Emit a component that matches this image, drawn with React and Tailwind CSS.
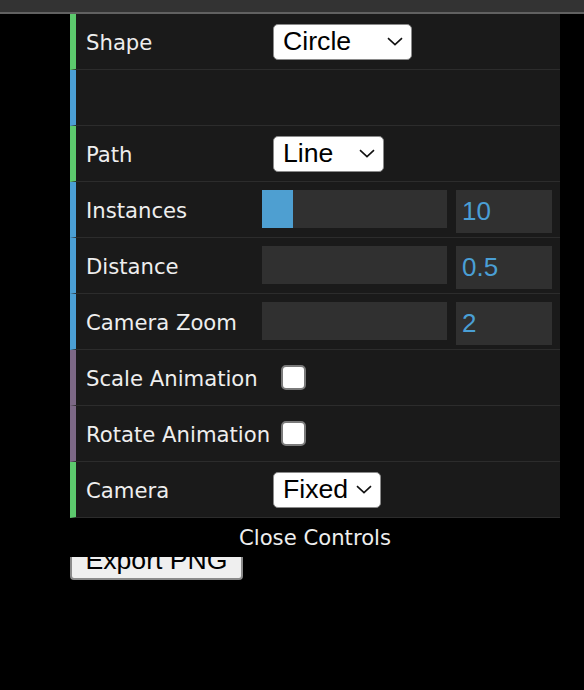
import React from "react";

const ROW_COLORS = {
  option: "border-l-[#5cc96d]",
  number: "border-l-[#4b9fd4]",
  boolean: "border-l-[#7c6886]",
};

const Chevron = () => (
  <svg width="16" height="9" viewBox="0 0 16 9" className="shrink-0">
    <polyline points="1,1.2 8,7.6 15,1.2" fill="none" stroke="#111" strokeWidth="1.6" />
  </svg>
);

const Select = ({ value, width }) => (
  <div
    className={`flex h-[36px] items-center justify-between rounded-[5px] border border-[#8a8a8a] bg-white pl-[9px] pr-[8px] text-[26.67px] leading-none text-black ${width}`}
    style={{ fontFamily: '"Liberation Sans", Arial, sans-serif' }}
  >
    <span className="-mt-[1px]">{value}</span>
    <Chevron />
  </div>
);

const Slider = ({ fill, value }) => (
  <div className="flex items-start gap-[9px] self-start pt-[8px]">
    <div className="-ml-[11px] h-[38px] w-[185px] bg-[#303030]">
      {fill > 0 && <div className="h-full bg-[#4e9fd1]" style={{ width: fill }} />}
    </div>
    <div
      className="flex h-[43px] w-[96px] items-center bg-[#303030] pl-[6px] text-[26px] text-[#4a9fd5]"
      style={{ fontFamily: '"Liberation Sans", Arial, sans-serif' }}
    >
      {value}
    </div>
  </div>
);

const Checkbox = () => (
  <div className="ml-[8px] h-[25px] w-[25px] rounded-[5px] border-[2px] border-[#7a7a7a] bg-white" />
);

const Row = ({ kind, label, children }) => (
  <div
    className={`flex h-[56px] items-center border-b border-b-[#2c2c2c] border-l-[6px] pl-[10px] pr-[8px] ${ROW_COLORS[kind]}`}
  >
    <div className="w-[187px] shrink-0 pt-[2px] text-[#eeeeee]">{label}</div>
    {children}
  </div>
);

export default function App() {
  return (
    <div
      className="flex h-[690px] w-[584px] flex-col bg-black text-[21.2px]"
      style={{ fontFamily: '"DejaVu Sans", "Lucida Grande", sans-serif' }}
    >
      <div className="h-[14px] border-b-[2px] border-b-[#616161] bg-[#333333]" />

      <div className="ml-[70px] w-[490px]">
        <div className="bg-[#1a1a1a]">
          <Row kind="option" label="Shape">
            <Select value="Circle" width="w-[139px]" />
          </Row>
          <Row kind="number" label="" />
          <Row kind="option" label="Path">
            <Select value="Line" width="w-[111px]" />
          </Row>
          <Row kind="number" label="Instances">
            <Slider fill={31} value="10" />
          </Row>
          <Row kind="number" label="Distance">
            <Slider fill={0} value="0.5" />
          </Row>
          <Row kind="number" label="Camera Zoom">
            <Slider fill={0} value="2" />
          </Row>
          <Row kind="boolean" label="Scale Animation">
            <Checkbox />
          </Row>
          <Row kind="boolean" label="Rotate Animation">
            <Checkbox />
          </Row>
          <Row kind="option" label="Camera">
            <Select value="Fixed" width="w-[108px]" />
          </Row>
        </div>

        <div className="relative z-10 flex h-[39px] items-center justify-center bg-black pt-[1px] text-[#eeeeee]">
          Close Controls
        </div>

        <button
          className="relative z-0 -mt-[16px] block h-[39px] w-[173px] rounded-[4px] border-[2px] border-[#8a8a8a] bg-[#efefef] text-[26.67px] leading-none text-black"
          style={{ fontFamily: '"Liberation Sans", Arial, sans-serif' }}
        >
          Export PNG
        </button>
      </div>
    </div>
  );
}
